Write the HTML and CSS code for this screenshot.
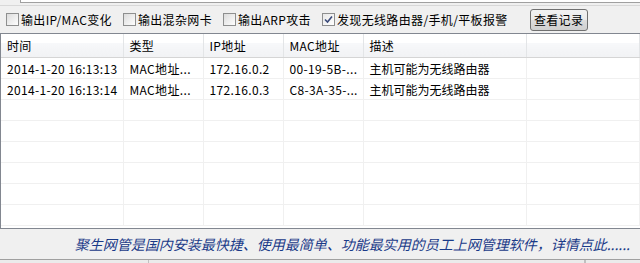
FILE: index.html
```html
<!DOCTYPE html>
<html lang="zh-CN">
<head>
    <meta charset="UTF-8">
    <meta name="viewport" content="width=device-width, initial-scale=1.0">
    <title>监控记录</title>
    <link rel="stylesheet" href="styles.css">
</head>
<body>
    <div class="window">
        <div class="top-strip"><div class="top-tab"></div></div>
        <div class="toolbar">
            <label class="check"><span class="box"></span>输出IP/MAC变化</label>
            <label class="check"><span class="box"></span>输出混杂网卡</label>
            <label class="check"><span class="box"></span>输出ARP攻击</label>
            <label class="check"><span class="box checked">
                <svg width="9" height="9" viewBox="0 0 9 9"><path d="M1 4.5 L3.5 7 L8 1.5" fill="none" stroke="#3a4a7a" stroke-width="1.6"/></svg>
            </span>发现无线路由器/手机/平板报警</label>
            <button class="btn">查看记录</button>
        </div>
        <div class="list">
            <table>
                <colgroup>
                    <col class="c1"><col class="c2"><col class="c3"><col class="c4"><col class="c5"><col>
                </colgroup>
                <thead>
                    <tr><th>时间</th><th>类型</th><th>IP地址</th><th>MAC地址</th><th>描述</th><th></th></tr>
                </thead>
                <tbody>
                    <tr><td>2014-1-20 16:13:13</td><td>MAC地址...</td><td>172.16.0.2</td><td>00-19-5B-...</td><td class="desc">主机可能为无线路由器</td><td></td></tr>
                    <tr><td>2014-1-20 16:13:14</td><td>MAC地址...</td><td>172.16.0.3</td><td>C8-3A-35-...</td><td class="desc">主机可能为无线路由器</td><td></td></tr>
                    <tr><td></td><td></td><td></td><td></td><td></td><td></td></tr>
                    <tr><td></td><td></td><td></td><td></td><td></td><td></td></tr>
                    <tr><td></td><td></td><td></td><td></td><td></td><td></td></tr>
                    <tr><td></td><td></td><td></td><td></td><td></td><td></td></tr>
                    <tr><td></td><td></td><td></td><td></td><td></td><td></td></tr>
                    <tr><td></td><td></td><td></td><td></td><td></td><td></td></tr>
                </tbody>
            </table>
        </div>
        <div class="promo">聚生网管是国内安装最快捷、使用最简单、功能最实用的员工上网管理软件，详情点此......</div>
        <div class="status">
            <div class="pane p1"></div>
            <div class="pane p2"></div>
            <div class="pane"></div>
        </div>
    </div>
</body>
</html>
```

FILE: styles.css
```css
body {
    margin: 0;
    background-color: #f0f0f0;
    font-family: "Noto Sans CJK SC", "Liberation Sans", sans-serif;
    font-size: 12px;
    letter-spacing: 0.35px;
    color: #000;
}

.window {
    width: 640px;
    height: 263px;
    overflow: hidden;
    display: flex;
    flex-direction: column;
}

.top-strip {
    height: 5px;
    background-color: #f0f0f0;
}

.top-tab {
    margin-left: 20px;
    height: 2px;
    border-bottom: 1px solid #a0a0a0;
    background-color: #fff;
    border-left: 1px solid #a0a0a0;
}

.toolbar {
    height: 27px;
    display: flex;
    align-items: center;
    padding-left: 6px;
    border-top: 1px solid #d8d8d8;
}

.check {
    display: flex;
    align-items: center;
    margin-right: 11px;
    white-space: nowrap;
}

.box {
    width: 11px;
    height: 11px;
    border: 1px solid #8e8f8f;
    background: linear-gradient(135deg, #dcdcdc, #fefefe);
    margin-right: 2px;
    display: flex;
    align-items: center;
    justify-content: center;
}

.box.checked {
    background: linear-gradient(135deg, #e8e8e8, #ffffff);
}

.btn {
    margin-left: 11px;
    width: 58px;
    height: 22px;
    font-family: inherit;
    font-size: 12px;
    letter-spacing: 0.35px;
    padding: 0;
    border: 1px solid #707070;
    border-radius: 3px;
    background: linear-gradient(#f2f2f2, #ebebeb 50%, #dddddd 51%, #cfcfcf);
}

.list {
    height: 194px;
    background-color: #fff;
    border-top: 1px solid #828790;
    border-left: 1px solid #828790;
    border-bottom: 1px solid #828790;
    overflow: hidden;
}

table {
    border-collapse: collapse;
    table-layout: fixed;
    width: 639px;
}

col.c1 { width: 122px; }
col.c2 { width: 80px; }
col.c3 { width: 80px; }
col.c4 { width: 80px; }
col.c5 { width: 163px; }

th {
    height: 23px;
    font-weight: normal;
    text-align: left;
    padding: 0 0 0 6px;
    background: linear-gradient(#ffffff, #ffffff 40%, #f7f8fa 41%, #f1f2f4);
    border-right: 1px solid #e3e5e7;
    border-bottom: 1px solid #d5d5d5;
}

td {
    height: 20px;
    padding: 0 0 0 6px;
    white-space: nowrap;
    overflow: hidden;
    border-right: 1px solid #f0f0f0;
    border-bottom: 1px solid #f0f0f0;
}

td.desc {
    letter-spacing: 0;
}

.promo {
    height: 30px;
    line-height: 30px;
    text-align: right;
    padding-right: 10px;
    color: #1a3a88;
    font-style: italic;
    font-size: 14px;
    letter-spacing: 0;
    border-bottom: 1px solid #a0a0a0;
}

.status {
    flex: 1;
    display: flex;
    background-color: #ebebeb;
}

.pane {
    border-right: 1px solid #c0c0c0;
}

.p1 { width: 148px; }
.p2 { width: 435px; }
```
